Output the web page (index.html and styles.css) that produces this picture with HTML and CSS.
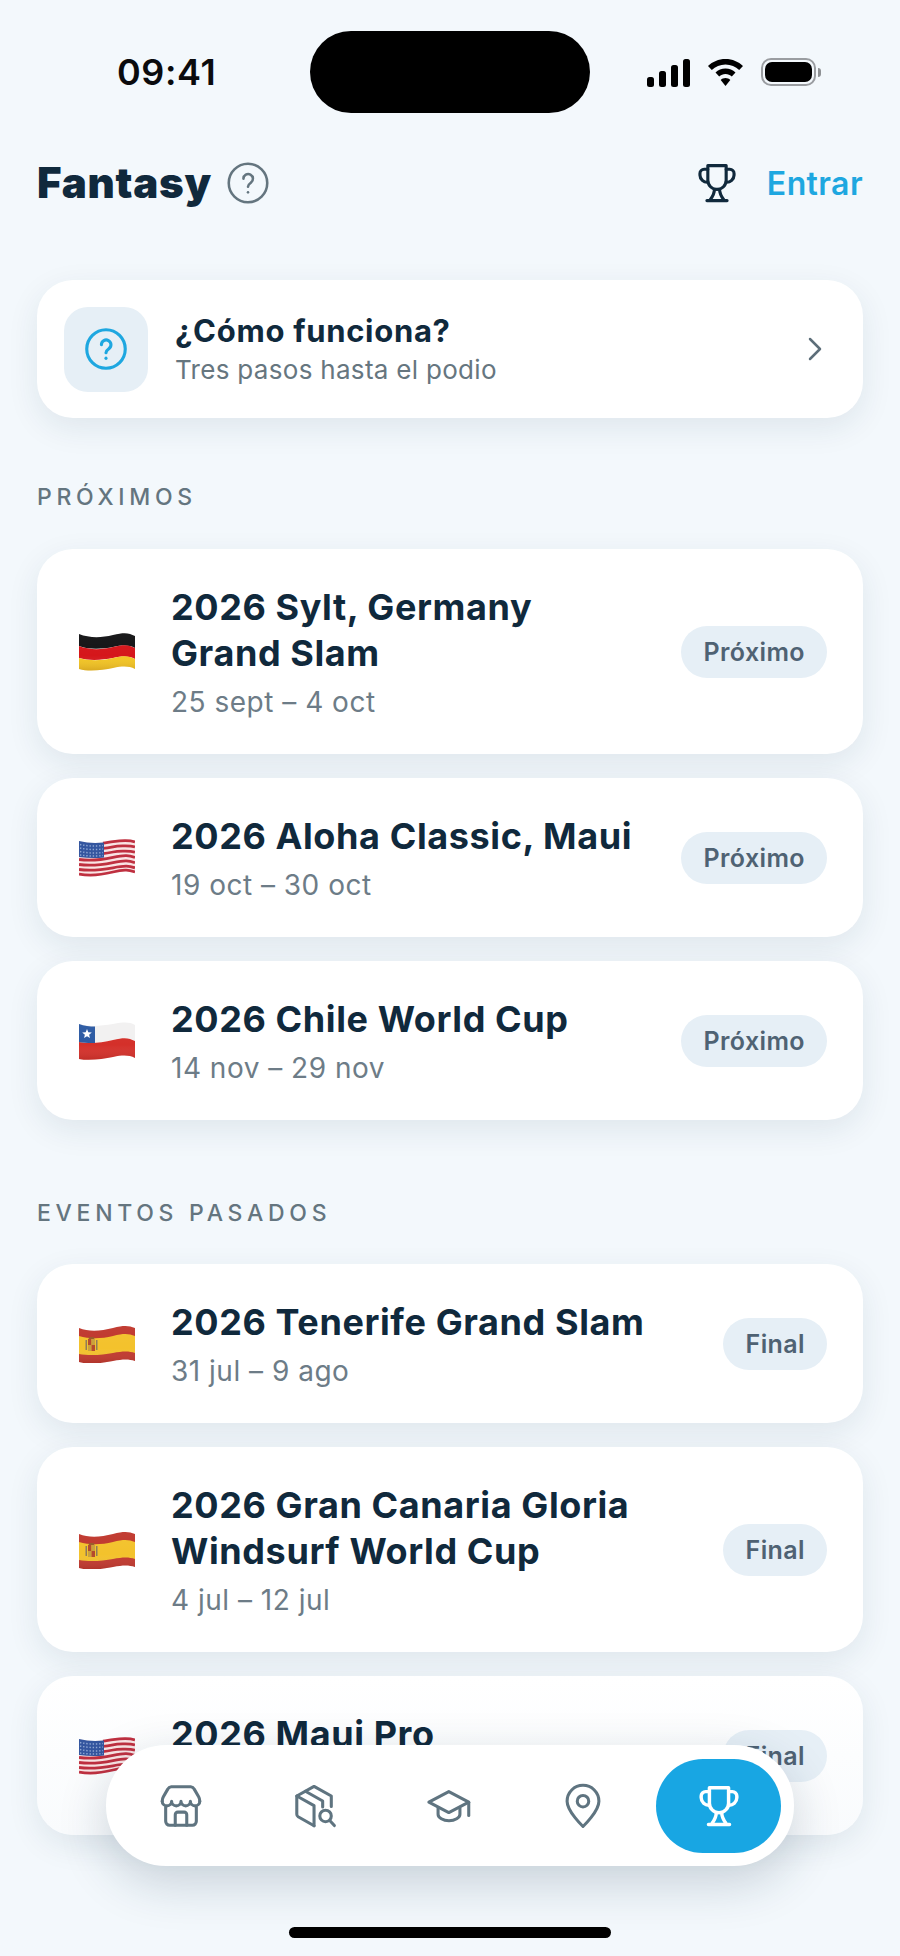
FILE: index.html
```html
<!DOCTYPE html>
<html lang="es">
<head>
<meta charset="utf-8">
<title>Fantasy</title>
<link rel="stylesheet" href="styles.css">
</head>
<body>
<svg class="defs" aria-hidden="true">
  <defs>
    <linearGradient id="gloss" x1="0" y1="0" x2="0" y2="1">
      <stop offset="0" stop-color="#fff" stop-opacity=".03"/>
      <stop offset=".6" stop-color="#fff" stop-opacity="0"/>
      <stop offset="1" stop-color="#5a1a10" stop-opacity=".16"/>
    </linearGradient>
    <symbol id="trophy" viewBox="0 0 24 24">
      <path d="M7 2.500h10v8a5 5 0 0 1-10 0z"/>
      <path d="M7 4.500H5a2.300 2.300 0 0 0-2.300 2.300v.9A4 4 0 0 0 7 11.600M17 4.500h2a2.300 2.300 0 0 1 2.300 2.300v.9a4 4 0 0 1-4.300 3.900"/>
      <path d="M10.600 15.400c0 2.400-.8 3.700-2.200 5.600M13.400 15.400c0 2.400.8 3.700 2.200 5.600M6.500 21.600h11"/>
    </symbol>
    <symbol id="question" viewBox="0 0 24 24">
      <circle cx="12" cy="12" r="10.500"/>
      <path d="M9.500 9.600a2.600 2.600 0 1 1 4.100 2.200c-1 .7-1.600 1.100-1.600 2.200"/>
      <path d="M12 17v.1"/>
    </symbol>
    <symbol id="flag-de" viewBox="0 0 56 38">
      <path fill="#141416" d="M0 1C10 5 22 5 34 2S50 0 56 3V15C50 12 44 12 34 14S10 17 0 13z"/>
      <path fill="#d5161b" d="M0 13C10 17 22 17 34 14S50 12 56 15V26C50 23 44 23 34 25S10 28 0 25z"/>
      <path fill="#f2c522" d="M0 25C10 28 22 28 34 25S50 23 56 26V36C50 33 44 33 34 35S10 39 0 36z"/>
      <path fill="url(#gloss)" d="M0 1C10 5 22 5 34 2S50 0 56 3V36C50 33 44 33 34 35S10 39 0 36z"/>
    </symbol>
    <symbol id="flag-us" viewBox="0 0 56 38">
      <path fill="#f9e4e4" d="M0 2C10 5 22 4 34 2S50 0 56 2V33C50 31 44 31 34 33S10 38 0 36z"/>
      <g fill="none" stroke="#bf3040" stroke-width="2.800">
        <path d="M24 4.200C28 3.600 31 3 34 2.600S50 .8 56 3"/>
        <path d="M24 9.400C28 9 31 8.400 34 7.800S50 6 56 8"/>
        <path d="M24 14.600C28 14.200 31 13.600 34 13S50 11.200 56 13.200"/>
        <path d="M0 20.500C10 22 22 21 34 18.400S50 16.400 56 18.400"/>
        <path d="M0 25.500C10 27 22 26 34 23.600S50 21.600 56 23.600"/>
        <path d="M0 30.500C10 32 22 31 34 28.800S50 26.800 56 28.800"/>
        <path d="M0 35C10 37 22 36 34 33S50 31.200 56 33"/>
      </g>
      <path fill="#34569f" d="M0 2C8 4 16 4.500 25 3.500V18.500C16 19.500 8 19 0 18z"/>
      <g fill="none" stroke="#8fa7d4" stroke-width="1.400" stroke-dasharray="1.400 1.800">
        <path d="M1 5.500C8 7 16 7.500 24 6.500"/>
        <path d="M1 9C8 10.500 16 11 24 10"/>
        <path d="M1 12.500C8 14 16 14.500 24 13.500"/>
        <path d="M1 16C8 17 16 17.500 24 16.500"/>
      </g>
    </symbol>
    <symbol id="flag-cl" viewBox="0 0 56 38">
      <path fill="#f2f1f1" d="M0 2C10 5 22 4 34 2S50 0 56 3V19C50 16 44 16 34 18S10 22 0 20z"/>
      <path fill="#d4302a" d="M0 20C10 22 22 21 34 18S50 16 56 19V36C50 33 44 33 34 35S10 39 0 37z"/>
      <path fill="#2c5aa3" d="M0 2C5 4 11 4.500 16 4.500V21C11 21.300 5 21 0 20z"/>
      <path fill="#fff" d="M8 7l1.300 3.300 3.500.2-2.700 2.200.9 3.400L8 14.200l-3 1.900.9-3.400-2.700-2.200 3.500-.2z"/>
      <path fill="url(#gloss)" d="M0 2C10 5 22 4 34 2S50 0 56 3V36C50 33 44 33 34 35S10 39 0 37z"/>
    </symbol>
    <symbol id="flag-es" viewBox="0 0 56 38">
      <path fill="#c0382e" d="M0 3C10 7 22 6 34 3S50 1 56 3V36C50 34 44 34 34 36S10 40 0 37z"/>
      <path fill="#f3c22c" d="M0 11C10 14 22 14 34 11S50 9 56 11V28C50 26 44 26 34 28S10 31 0 29z"/>
      <rect x="9" y="14" width="3.500" height="6" fill="#b5492c"/>
      <rect x="12.500" y="14" width="3.500" height="6" fill="#c9a03c"/>
      <rect x="9" y="20" width="3.500" height="6" fill="#c9a03c"/>
      <rect x="12.500" y="20" width="3.500" height="6" fill="#b5492c"/>
      <rect x="9.500" y="12" width="6" height="2" rx="1" fill="#9a5a2a"/>
      <rect x="6.500" y="15" width="1.500" height="10" fill="#8f7a5a"/>
      <rect x="17" y="15" width="1.500" height="10" fill="#8f7a5a"/>
      <path fill="url(#gloss)" d="M0 3C10 7 22 6 34 3S50 1 56 3V36C50 34 44 34 34 36S10 40 0 37z"/>
    </symbol>
  </defs>
</svg>

<div class="screen">
  <div class="status">
    <span class="time">09:41</span>
    <div class="island"></div>
    <div class="indicators">
      <div class="signal"><i class="b1"></i><i class="b2"></i><i class="b3"></i><i class="b4"></i></div>
      <svg class="wifi" viewBox="0 0 37 29"><path d="M18.500 1C11.500 1 5.500 3.700 1 8l3.800 4C8.400 8.500 13.200 6.400 18.500 6.400S28.600 8.500 32.200 12L36 8C31.500 3.700 25.500 1 18.500 1z"/><path d="M18.500 10.600c-3.900 0-7.400 1.500-10 4l3.700 3.900c1.600-1.600 3.900-2.500 6.300-2.500s4.700.9 6.300 2.500l3.700-3.900c-2.600-2.500-6.100-4-10-4z"/><path d="M18.500 20c-1.900 0-3.500.7-4.800 1.900l4.800 6.100 4.800-6.100c-1.300-1.200-2.900-1.900-4.800-1.900z"/></svg>
      <div class="battery"><div class="cell"><div class="charge"></div></div><div class="nub"></div></div>
    </div>
  </div>

  <header class="top">
    <div class="brand">
      <h1>Fantasy</h1>
      <svg class="ico ico-help"><use href="#question"/></svg>
    </div>
    <div class="actions">
      <svg class="ico ico-trophy"><use href="#trophy"/></svg>
      <a class="login">Entrar</a>
    </div>
  </header>

  <main class="content">
    <section class="card help">
      <div class="help-icon"><svg class="ico ico-q"><use href="#question"/></svg></div>
      <div class="help-text">
        <h2>¿Cómo funciona?</h2>
        <p>Tres pasos hasta el podio</p>
      </div>
      <svg class="chevron" viewBox="0 0 14 24"><path d="M2 2l10 10L2 22"/></svg>
    </section>

    <h3 class="label first">PRÓXIMOS</h3>
    <div class="list">
      <article class="card event">
        <svg class="flag"><use href="#flag-de"/></svg>
        <div class="info"><h4>2026 Sylt, Germany Grand Slam</h4><p>25 sept – 4 oct</p></div>
        <span class="pill">Próximo</span>
      </article>
      <article class="card event">
        <svg class="flag"><use href="#flag-us"/></svg>
        <div class="info"><h4>2026 Aloha Classic, Maui</h4><p>19 oct – 30 oct</p></div>
        <span class="pill">Próximo</span>
      </article>
      <article class="card event">
        <svg class="flag"><use href="#flag-cl"/></svg>
        <div class="info"><h4>2026 Chile World Cup</h4><p>14 nov – 29 nov</p></div>
        <span class="pill">Próximo</span>
      </article>
    </div>

    <h3 class="label second">EVENTOS PASADOS</h3>
    <div class="list">
      <article class="card event">
        <svg class="flag"><use href="#flag-es"/></svg>
        <div class="info"><h4>2026 Tenerife Grand Slam</h4><p>31 jul – 9 ago</p></div>
        <span class="pill">Final</span>
      </article>
      <article class="card event">
        <svg class="flag"><use href="#flag-es"/></svg>
        <div class="info"><h4>2026 Gran Canaria Gloria Windsurf World Cup</h4><p>4 jul – 12 jul</p></div>
        <span class="pill">Final</span>
      </article>
      <article class="card event last">
        <svg class="flag"><use href="#flag-us"/></svg>
        <div class="info"><h4>2026 Maui Pro</h4><p>&nbsp;</p></div>
        <span class="pill">Final</span>
      </article>
    </div>
  </main>

  <nav class="tabbar">
    <a class="tab">
      <svg class="ico tab-ico" viewBox="0 0 24 24"><path d="M2.200 9.500c0-1 .2-1.600.6-2.300l2.300-4A2.200 2.200 0 0 1 6.900 2h10.200a2.200 2.200 0 0 1 1.800 1.200l2.300 4c.4.700.6 1.300.6 2.300"/><path d="M2.200 9.500a2.450 2.450 0 0 0 4.900 0 2.450 2.450 0 0 0 4.900 0 2.450 2.450 0 0 0 4.900 0 2.450 2.450 0 0 0 4.900 0"/><path d="M4 12.500v7.500A2 2 0 0 0 6 22h12a2 2 0 0 0 2-2v-7.500"/><path d="M9 22v-5.500a1.300 1.300 0 0 1 1.300-1.300h3.400a1.300 1.300 0 0 1 1.300 1.300V22"/></svg>
    </a>
    <a class="tab">
      <svg class="ico tab-ico" viewBox="0 0 24 24"><path d="M11.500 22.300 3.200 17.600a1.500 1.500 0 0 1-.7-1.300V6.800l9-5 9 5v5.500"/><path d="M2.500 6.800l9 5v10.500"/><path d="M7 4.300l9 5.100v3.100"/><circle cx="17.500" cy="17.200" r="3"/><path d="M19.800 19.700l2.300 2.500"/></svg>
    </a>
    <a class="tab">
      <svg class="ico tab-ico" viewBox="0 0 24 24"><path d="M11.900 4.500 1.500 10l10.400 5.400L22.300 10z"/><path d="M6.300 13v3.300c0 1.800 2.600 3.400 5.700 3.400s5.700-1.600 5.700-3.400V13"/><path d="M22.300 10v7"/></svg>
    </a>
    <a class="tab">
      <svg class="ico tab-ico" viewBox="0 0 24 24"><path d="M12 22.700S3.700 14.800 3.700 9.500a8.300 8.300 0 0 1 16.600 0c0 5.300-8.300 13.200-8.300 13.200z"/><circle cx="12" cy="9.500" r="3"/></svg>
    </a>
    <a class="tab active">
      <svg class="ico tab-ico"><use href="#trophy"/></svg>
    </a>
  </nav>
  <div class="home"></div>
</div>
</body>
</html>
```
FILE: styles.css
```css
* { box-sizing: border-box; margin: 0; padding: 0; }

html, body { background: #f3f8fc; }

body {
  font-family: Inter, "Liberation Sans", sans-serif;
  color: #10293c;
}

.defs { position: absolute; width: 0; height: 0; overflow: hidden; }

.screen {
  position: relative;
  width: 900px;
  height: 1956px;
  overflow: hidden;
  background: #f3f8fc;
}

.ico { fill: none; stroke: currentColor; stroke-linecap: round; stroke-linejoin: round; stroke-width: 2; }

/* status bar */
.status {
  display: flex;
  align-items: center;
  padding: 31px 79px 0 117px;
}
.time {
  width: 98px;
  font-size: 36px;
  font-weight: 600;
  line-height: 82px;
  letter-spacing: 0.6px;
  color: #0b0b0d;
  white-space: nowrap;
}
.island { width: 280px; height: 82px; border-radius: 41px; background: #000; margin-left: 95px; }
.indicators { display: flex; align-items: center; gap: 17px; margin-left: auto; }
.signal { display: flex; align-items: flex-end; gap: 5px; height: 29px; }
.signal i { display: block; width: 7px; border-radius: 2.5px; background: #000; }
.signal .b1 { height: 10px; }
.signal .b2 { height: 16px; }
.signal .b3 { height: 22px; }
.signal .b4 { height: 28px; }
.wifi { width: 37px; height: 29px; fill: #000; }
.battery { display: flex; align-items: center; gap: 2px; }
.cell { width: 55px; height: 28px; padding: 2px; border: 2px solid #9a9da1; border-radius: 10px; }
.charge { width: 100%; height: 100%; border-radius: 7px; background: #000; }
.nub { width: 3px; height: 9px; border-radius: 0 3px 3px 0; background: #8e9194; }

/* header */
.top {
  display: flex;
  align-items: center;
  justify-content: space-between;
  margin-top: 44px;
  padding: 0 37px;
  height: 52px;
}
.brand { display: flex; align-items: center; gap: 14px; }
h1 { font-size: 42px; font-weight: 900; letter-spacing: 0.7px; line-height: 52px; color: #10293c; }
.ico-help { width: 44px; height: 44px; color: #64757f; stroke-width: 1.400; }
.actions { display: flex; align-items: center; gap: 28px; }
.ico-trophy { width: 44px; height: 44px; color: #10293c; stroke-width: 1.700; }
.login { font-size: 32px; font-weight: 600; letter-spacing: 0.4px; color: #1ea7e0; }

/* content */
.content { padding: 0 37px; margin-top: 71px; }

.card {
  background: #fff;
  border-radius: 36px;
  box-shadow: 0 10px 32px rgba(25, 60, 80, 0.09);
}

.help {
  display: flex;
  align-items: center;
  height: 138px;
  padding: 0 41px 0 27px;
}
.help-icon {
  display: flex;
  align-items: center;
  justify-content: center;
  width: 84px;
  height: 85px;
  border-radius: 24px;
  background: #e6eff6;
  flex: none;
}
.ico-q { width: 44px; height: 44px; color: #1ea7e0; stroke-width: 1.700; }
.help-text { flex: 1; margin-left: 27px; }
h2 { font-size: 31px; font-weight: 700; letter-spacing: 0.7px; line-height: 40px; color: #10293c; }
.help-text p { font-size: 26px; letter-spacing: 0.3px; line-height: 34px; margin-top: 2px; color: #66767f; }
.chevron { width: 14px; height: 24px; fill: none; stroke: #5d6e79; stroke-width: 2.500; stroke-linecap: round; stroke-linejoin: round; }

.label {
  font-size: 23px;
  font-weight: 500;
  letter-spacing: 4.7px;
  line-height: 28px;
  color: #64757f;
}
.label.first { margin-top: 65px; margin-bottom: 38px; }
.label.second { margin-top: 79px; margin-bottom: 37px; }

.list { display: flex; flex-direction: column; gap: 24px; }

.event {
  display: flex;
  align-items: center;
  padding: 35px 36px 34px 42px;
}
.last { background: linear-gradient(to bottom, #fff, #f9fbfd); }
.flag { width: 56px; height: 38px; flex: none; }
.info { flex: 1; margin-left: 36px; min-width: 0; }
h4 { font-size: 36px; font-weight: 740; letter-spacing: 0.6px; line-height: 46px; color: #10293c; }
.info p { font-size: 28px; letter-spacing: 0.5px; line-height: 36px; margin-top: 8px; color: #6d7c87; }
.pill {
  flex: none;
  margin-left: 36px;
  padding: 0 22px 0 23px;
  height: 52px;
  line-height: 52px;
  border-radius: 26px;
  background: #e6eff6;
  font-size: 25px;
  font-weight: 600;
  letter-spacing: 0.4px;
  color: #4f6273;
}

/* bottom */
.tabbar {
  position: absolute;
  left: 106px;
  top: 1745px;
  width: 688px;
  height: 121px;
  display: flex;
  align-items: center;
  padding: 0 13px 0 8px;
  border-radius: 60px;
  background: #fff;
  box-shadow: 0 16px 50px rgba(20, 50, 75, 0.2);
}
.tab {
  flex: none;
  width: 134px;
  height: 94px;
  display: flex;
  align-items: center;
  justify-content: center;
  color: #5f7480;
}
.tab-ico { width: 46px; height: 46px; stroke-width: 1.600; }
.tab.active { width: 125px; margin-left: auto; border-radius: 47px; background: #18a6e3; color: #fff; }
.tab.active .tab-ico { stroke-width: 1.800; }

.home {
  position: absolute;
  left: 289px;
  top: 1927px;
  width: 322px;
  height: 11px;
  border-radius: 6px;
  background: #000;
}
```
